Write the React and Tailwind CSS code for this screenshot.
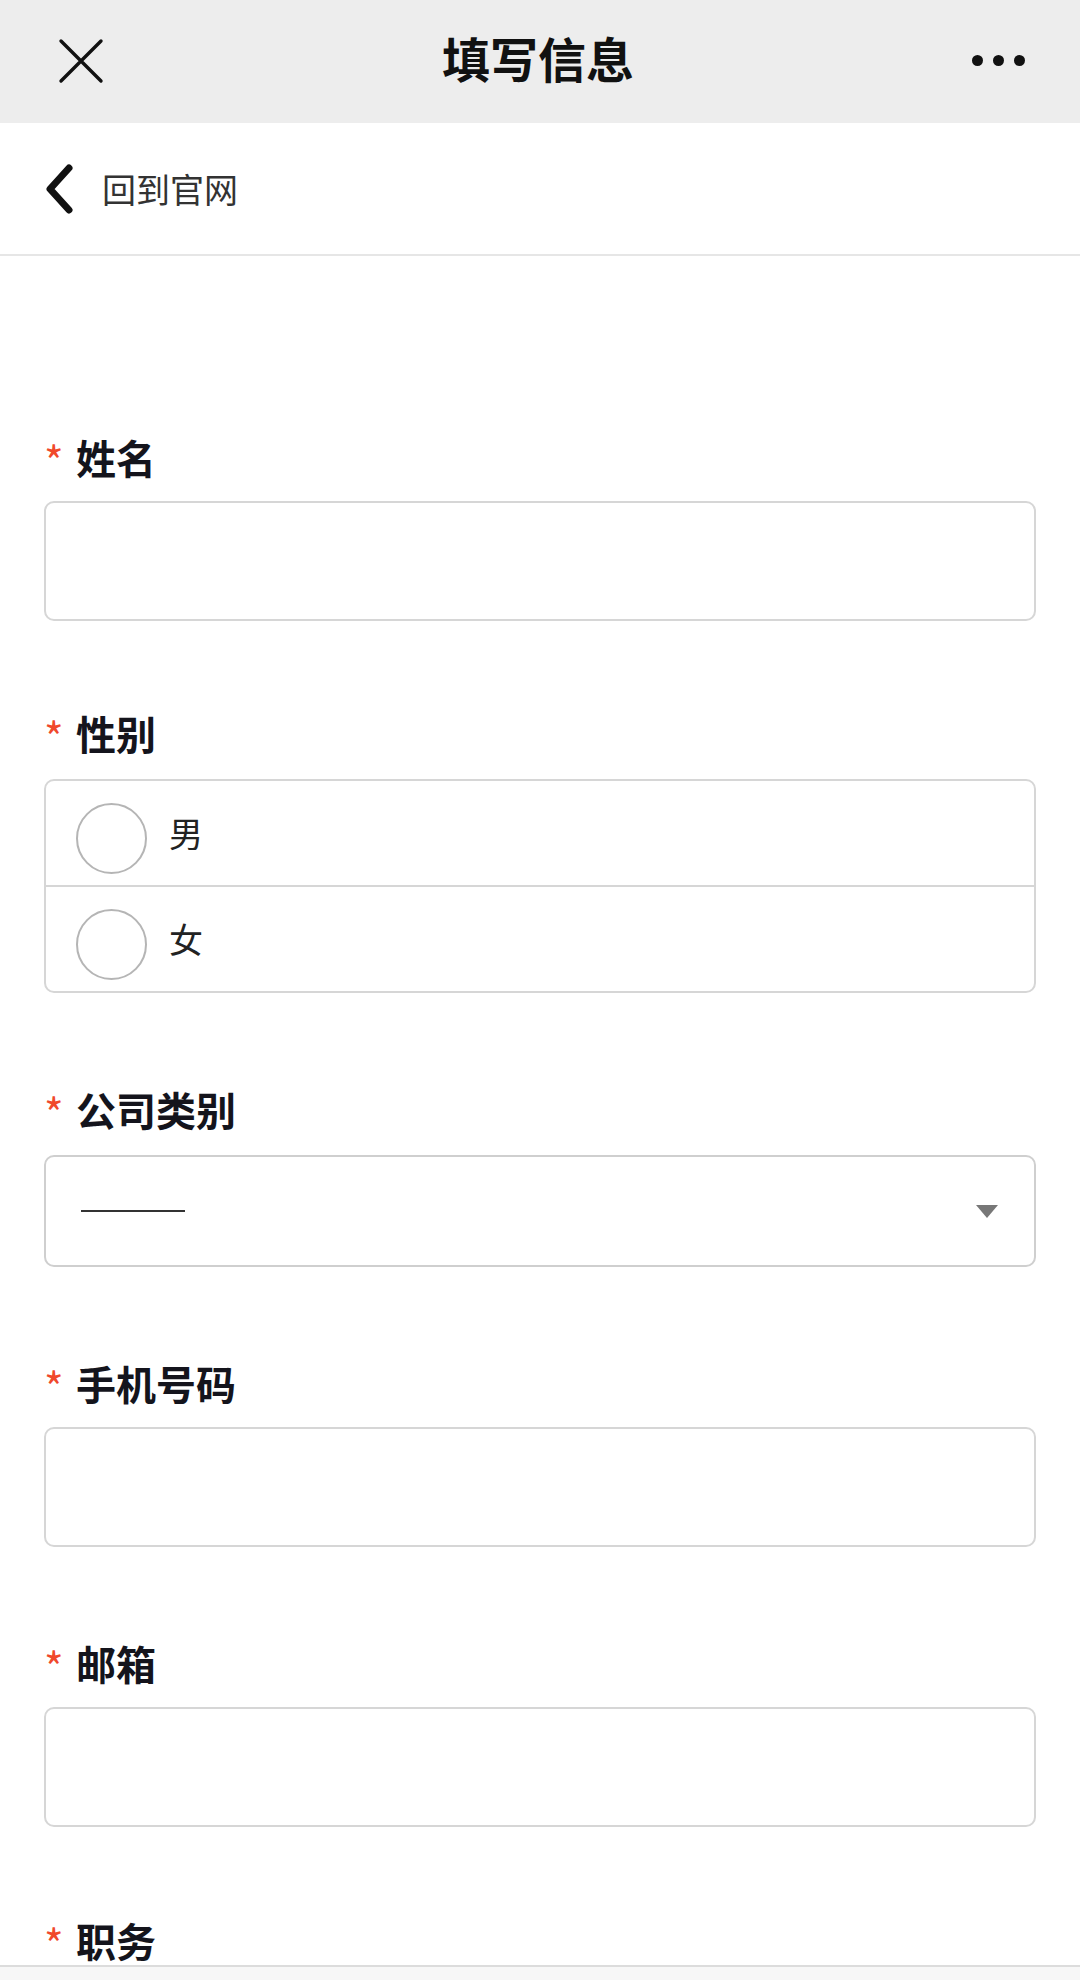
import React from "react";

const font = { fontFamily: '"Noto Sans CJK SC", "Noto Sans", sans-serif' };

function Label({ text }) {
  return (
    <div className="flex items-center h-[48px] pl-[44px]">
      <span className="text-[#f0492b] text-[42px] leading-none w-[32px] mt-[6px] font-normal">*</span>
      <span className="text-[40px] leading-none font-bold text-[#14141c]">{text}</span>
    </div>
  );
}

function TextBox() {
  return (
    <div className="mt-[20px] mx-[44px] h-[120px] border-2 border-[#d6d6d6] rounded-[10px] bg-white" />
  );
}

function Radio({ text }) {
  return (
    <div className="flex items-center h-[104px] pl-[30px]">
      <div className="w-[71px] h-[71px] rounded-full border-2 border-[#b5b5b5] mt-[10px] shrink-0" />
      <span className="ml-[22px] text-[34px] leading-none text-[#222]">{text}</span>
    </div>
  );
}

export default function App() {
  return (
    <div className="w-[1080px] h-[1980px] overflow-hidden bg-white flex flex-col" style={font}>
      {/* top bar */}
      <div className="h-[123px] bg-[#ededed] flex items-center justify-between px-[58px] shrink-0">
        <svg width="46" height="46" viewBox="0 0 46 46" className="mt-[-2px]">
          <path d="M3 3 L43 43 M43 3 L3 43" stroke="#111" strokeWidth="3.4" strokeLinecap="round" />
        </svg>
        <span className="text-[48px] font-semibold text-[#111] leading-none mt-[-10px]">填写信息</span>
        <div className="flex gap-[10px] items-center mr-[-3px] mt-[-2px]">
          <span className="w-[11px] h-[11px] rounded-full bg-[#111]" />
          <span className="w-[11px] h-[11px] rounded-full bg-[#111]" />
          <span className="w-[11px] h-[11px] rounded-full bg-[#111]" />
        </div>
      </div>
      {/* back row */}
      <div className="h-[133px] border-b-2 border-[#e6e6e6] flex items-center pl-[43px] shrink-0">
        <svg width="32" height="50" viewBox="0 0 32 50">
          <path d="M26 4 L7 25 L26 46" stroke="#111" strokeWidth="7" fill="none" strokeLinecap="round" strokeLinejoin="round" />
        </svg>
        <span className="ml-[27px] text-[34px] text-[#333] leading-none">回到官网</span>
      </div>

      <div className="pt-[177px] flex flex-col">
        <Label text="姓名" />
        <TextBox />

        <div className="mt-[88px]">
          <Label text="性别" />
        </div>
        <div className="mt-[22px] mx-[44px] border-2 border-[#d6d6d6] rounded-[10px] flex flex-col">
          <Radio text="男" />
          <div className="h-[2px] bg-[#d6d6d6]" />
          <Radio text="女" />
        </div>

        <div className="mt-[92px]">
          <Label text="公司类别" />
        </div>
        <div className="mt-[22px] mx-[44px] h-[112px] border-2 border-[#cfcfcf] rounded-[10px] flex items-center justify-between pl-[35px] pr-[36px]">
          <div className="w-[104px] h-[2px] bg-[#333]" />
          <svg width="22" height="13" viewBox="0 0 22 13">
            <path d="M0 0 L22 0 L11 13 Z" fill="#777" />
          </svg>
        </div>

        <div className="mt-[92px]">
          <Label text="手机号码" />
        </div>
        <TextBox />

        <div className="mt-[92px]">
          <Label text="邮箱" />
        </div>
        <TextBox />

        <div className="mt-[89px]">
          <Label text="职务" />
        </div>
        <div className="mt-[1px] h-[40px] border-t-2 border-[#dcdcdc] bg-[#f7f7f7]" />
      </div>
    </div>
  );
}
